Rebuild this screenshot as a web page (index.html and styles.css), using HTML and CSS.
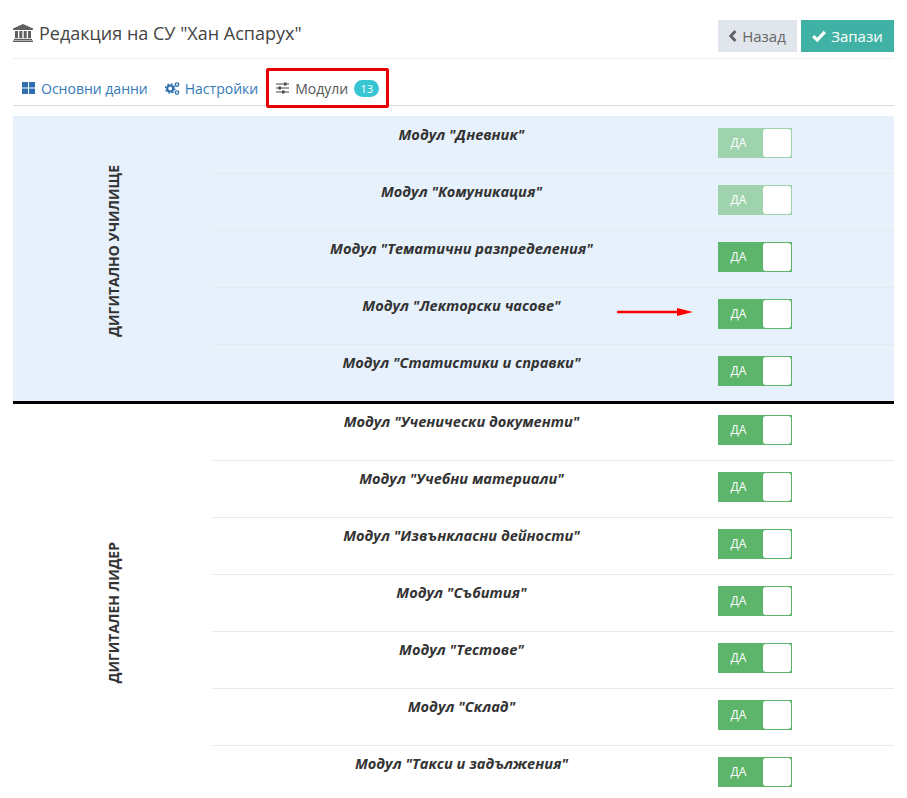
FILE: index.html
```html
<!DOCTYPE html>
<html lang="bg">
<head>
<meta charset="utf-8">
<title>Редакция</title>
<link rel="stylesheet" href="styles.css">
</head>
<body>
<div class="page">
  <header class="head">
    <h1 class="title">
      <svg class="bank" viewBox="0 0 20 18" width="20" height="18"><path fill="#5f5f5f" d="M10 0 20 4.500V6H0V4.500ZM2 7h3v7H2ZM6.300 7h3v7h-3ZM10.700 7h3v7h-3ZM15 7h3v7h-3ZM1 14.800h18v1.200H1ZM0 16.600h20V18H0Z"/></svg>
      Редакция на СУ "Хан Аспарух"
    </h1>
    <div class="actions">
      <a class="btn back"><svg viewBox="0 0 8 12" width="8" height="12"><path d="M6.500 1 1.800 6l4.700 5" fill="none" stroke="#5f6368" stroke-width="2.800"/></svg>Назад</a>
      <a class="btn save"><svg viewBox="0 0 14 12" width="14" height="12"><path d="M1.200 6.200 5.200 10 12.800 1.800" fill="none" stroke="#fff" stroke-width="3.200"/></svg>Запази</a>
    </div>
  </header>
  <nav class="tabs">
    <a class="tab">
      <svg viewBox="0 0 13 12" width="13" height="12"><path fill="#2f6fb0" d="M0 0h6v5.500H0ZM7 0h6v5.500H7ZM0 6.500h6V12H0ZM7 6.500h6V12H7Z"/></svg>
      Основни данни
    </a>
    <a class="tab settings">
      <svg viewBox="0 0 15 13" width="15" height="13"><g fill="none" stroke="#2f6fb0"><circle cx="5.200" cy="6.500" r="3" stroke-width="2.200"/><circle cx="5.200" cy="6.500" r="4.600" stroke-width="1.400" stroke-dasharray="1.800 1.810"/><circle cx="12" cy="2.500" r="1.700" stroke-width="1.300"/><circle cx="12" cy="10.500" r="1.700" stroke-width="1.300"/></g></svg>
      Настройки
    </a>
    <a class="tab active">
      <svg viewBox="0 0 13 12" width="13" height="12"><path stroke="#444" stroke-width="1" d="M0 2h13M0 6h13M0 10h13"/><path fill="#444" d="M8 .5h2.500v3H8ZM2.500 4.500H5v3H2.500ZM6 8.500h2.500v3H6Z"/></svg>
      Модули <span class="badge">13</span>
    </a>
    <span class="highlight"></span>
  </nav>

  <section class="group blue">
    <div class="label"><span>ДИГИТАЛНО УЧИЛИЩЕ</span></div>
    <div class="rows">
      <div class="row"><span class="name">Модул "Дневник"</span><span class="toggle faded"><span class="yes">ДА</span><span class="knob"></span></span></div>
      <div class="row"><span class="name">Модул "Комуникация"</span><span class="toggle faded"><span class="yes">ДА</span><span class="knob"></span></span></div>
      <div class="row"><span class="name">Модул "Тематични разпределения"</span><span class="toggle"><span class="yes">ДА</span><span class="knob"></span></span></div>
      <div class="row"><span class="name">Модул "Лекторски часове"</span><span class="toggle"><span class="yes">ДА</span><span class="knob"></span></span>
        <svg class="arrow" viewBox="0 0 76 8" width="76" height="8"><path d="M1 4h62" stroke="#f00" stroke-width="2.600" stroke-linecap="round"/><path fill="#f00" d="M60 0 76 4 60 8Z"/></svg>
      </div>
      <div class="row"><span class="name">Модул "Статистики и справки"</span><span class="toggle"><span class="yes">ДА</span><span class="knob"></span></span></div>
    </div>
  </section>

  <section class="group second">
    <div class="label"><span>ДИГИТАЛЕН ЛИДЕР</span></div>
    <div class="rows">
      <div class="row"><span class="name">Модул "Ученически документи"</span><span class="toggle"><span class="yes">ДА</span><span class="knob"></span></span></div>
      <div class="row"><span class="name">Модул "Учебни материали"</span><span class="toggle"><span class="yes">ДА</span><span class="knob"></span></span></div>
      <div class="row"><span class="name">Модул "Извънкласни дейности"</span><span class="toggle"><span class="yes">ДА</span><span class="knob"></span></span></div>
      <div class="row"><span class="name">Модул "Събития"</span><span class="toggle"><span class="yes">ДА</span><span class="knob"></span></span></div>
      <div class="row"><span class="name">Модул "Тестове"</span><span class="toggle"><span class="yes">ДА</span><span class="knob"></span></span></div>
      <div class="row"><span class="name">Модул "Склад"</span><span class="toggle"><span class="yes">ДА</span><span class="knob"></span></span></div>
      <div class="row"><span class="name">Модул "Такси и задължения"</span><span class="toggle"><span class="yes">ДА</span><span class="knob"></span></span></div>
    </div>
  </section>
</div>
</body>
</html>
```
FILE: styles.css
```css
html, body { margin: 0; padding: 0; background: #fff; overflow: hidden; height: 798px; }
body { font-family: "Open Sans", sans-serif; font-size: 14px; color: #333; }
.page { padding: 0 13px; height: 798px; overflow: hidden; }

.head { display: flex; justify-content: space-between; height: 58px; border-bottom: 1px solid #eee; box-sizing: content-box; }
.title { margin: 21px 0 0; font-size: 18px; font-weight: 400; line-height: 24px; color: #444; display: flex; align-items: center; gap: 6px; height: 24px; }
.actions { display: flex; gap: 4px; padding-top: 20px; }
.btn { display: flex; align-items: center; justify-content: center; height: 32px; font-size: 15px; gap: 5px; }
.back { width: 79px; background: #e1e5ec; color: #666; }
.save { width: 93px; background: #3fb2a5; color: #fff; }

.tabs { position: relative; display: flex; height: 47px; border-bottom: 1px solid #ddd; align-items: center; padding: 12px 0 0 9px; gap: 17px; box-sizing: border-box; }
.tab { display: flex; align-items: center; gap: 6px; color: #337ab7; font-size: 14px; }
.tab.settings { gap: 5px; }
.tab.active { color: #555; margin-left: 1px; gap: 6px; }
.badge { background: #36c6d3; color: #fff; font-size: 11px; border-radius: 10px; width: 25px; height: 17px; line-height: 17px; text-align: center; }
.highlight { position: absolute; left: 253px; top: 9px; width: 123px; height: 40px; box-sizing: border-box; border: 3px solid #e60000; border-radius: 2px; }

.group { display: flex; }
.blue { background: #e7f1fb; margin-top: 10px; border-bottom: 3px solid #000; }
.label { width: 200px; flex: none; display: flex; align-items: center; justify-content: center; font-weight: 700; font-size: 14px; color: #333; box-sizing: border-box; }
.blue .label { padding-bottom: 16px; }
.second .label { padding-top: 20px; }
.label span { writing-mode: vertical-rl; transform: rotate(180deg); }
.rows { flex: 1; }
.row { position: relative; display: flex; height: 57px; box-sizing: border-box; border-top: 1px solid #e3e9ee; }
.row:first-child { border-top: 0; }
.second .row { border-top-color: #e8e8e8; }
.second .row:first-child { height: 56px; }
.name { flex: none; width: 497px; text-align: center; font-weight: 700; font-style: italic; font-size: 14.6px; line-height: 20px; padding-top: 7px; color: #333; }
.blue .row:first-child .name { padding-top: 8px; }
.toggle { display: flex; width: 74px; height: 30px; margin: 11px 0 0 8px; background: #5cb56a; border: 1px solid #5cb56a; box-sizing: border-box; }
.blue .row:first-child .toggle { margin-top: 12px; }
.toggle.faded { background: #9fd3ae; border-color: #9fd3ae; }
.yes { width: 44px; color: #fff; font-size: 12px; line-height: 28px; text-align: center; padding-right: 5px; box-sizing: border-box; }
.knob { flex: 1; background: #fff; border-radius: 3px; }
.arrow { position: absolute; left: 404px; top: 20px; }
```
